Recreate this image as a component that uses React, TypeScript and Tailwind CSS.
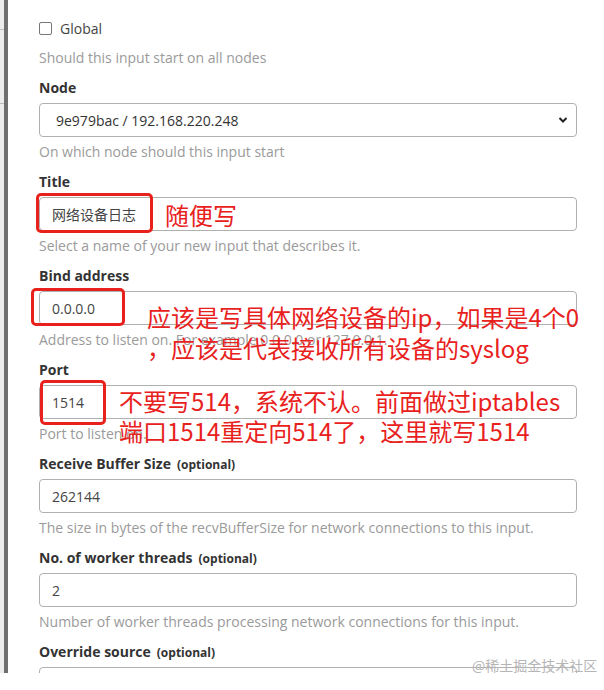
import React from "react";

const font = { fontFamily: '"Open Sans", "Noto Sans", sans-serif' };
const cjk = { fontFamily: '"Noto Sans CJK SC", "Noto Sans", sans-serif' };

function Label({ text, optional }: { text: string; optional?: boolean }) {
  return (
    <div className="h-[20px] leading-[20px] text-[14px] font-bold text-[#333] flex items-baseline">
      <span>{text}</span>
      {optional && <span className="ml-[6px] text-[12px] font-bold text-[#333]">(optional)</span>}
    </div>
  );
}

function Help({ text, top = "mt-[5px]" }: { text: string; top?: string }) {
  return <div className={`${top} h-[20px] leading-[20px] text-[14px] text-[#9a9a9a] whitespace-nowrap`}>{text}</div>;
}

function Input({ value }: { value: string }) {
  return (
    <div className="mt-[5px] h-[34px] w-[538px] rounded-[4px] border border-[#b0b0b0] bg-white flex items-center pl-[12px] text-[14px] text-[#444]">
      <span style={value.match(/[\u4e00-\u9fff]/) ? cjk : undefined}>{value}</span>
    </div>
  );
}

function Field({ label, optional, value, help }: { label: string; optional?: boolean; value: string; help: string }) {
  return (
    <div className="mb-[10px]">
      <Label text={label} optional={optional} />
      <Input value={value} />
      <Help text={help} />
    </div>
  );
}

export default function App() {
  return (
    <div className="relative w-[604px] h-[690px] overflow-hidden bg-white" style={font}>
      <div className="flex h-[673px]">
        <div className="w-[4px] bg-[#ececec] flex flex-col">
          <div className="h-[29px]" />
          <div className="h-[1px] bg-[#bdbdbd]" />
          <div className="h-[73px]" />
          <div className="h-[1px] bg-[#bdbdbd]" />
        </div>
        <div className="w-[4px] bg-[#6f6f6f]" />
        <div className="flex-1 pl-[31px] pt-[18px] overflow-hidden">
          <div className="h-[20px] flex items-center gap-[8px] text-[14px] text-[#444]">
            <div className="w-[13px] h-[13px] rounded-[2px] border border-[#767676] bg-white" />
            <span>Global</span>
          </div>
          <Help text="Should this input start on all nodes" top="mt-[10px]" />
          <div className="mt-[10px]">
            <Label text="Node" />
            <div className="mt-[5px] h-[34px] w-[538px] rounded-[4px] border border-[#b0b0b0] bg-white flex items-center justify-between pl-[16px] pr-[8px] text-[14px] text-[#333]">
              <span>9e979bac / 192.168.220.248</span>
              <svg width="10" height="8" viewBox="0 0 10 8">
                <path d="M1.5 2 L5 5.5 L8.5 2" fill="none" stroke="#222" strokeWidth="2" />
              </svg>
            </div>
            <Help text="On which node should this input start" />
          </div>
          <div className="mt-[10px]">
            <Field label="Title" value="网络设备日志" help="Select a name of your new input that describes it." />
            <Field label="Bind address" value="0.0.0.0" help="Address to listen on. For example 0.0.0.0 or 127.0.0.1." />
            <Field label="Port" value="1514" help="Port to listen on." />
            <Field label="Receive Buffer Size" optional value="262144" help="The size in bytes of the recvBufferSize for network connections to this input." />
            <Field label="No. of worker threads" optional value="2" help="Number of worker threads processing network connections for this input." />
            <Field label="Override source" optional value="" help="" />
          </div>
        </div>
      </div>

      {/* annotation boxes */}
      <div className="absolute left-[36px] top-[193px] w-[117px] h-[40px] rounded-[5px] border-[3px] border-[#e8211d]" />
      <div className="absolute left-[31px] top-[288px] w-[94px] h-[38px] rounded-[5px] border-[3px] border-[#e8211d]" />
      <div className="absolute left-[40px] top-[380px] w-[66px] h-[45px] rounded-[5px] border-[3px] border-[#e8211d]" />

      {/* annotation text */}
      <div className="absolute left-[165px] top-[199px] text-[24px] leading-[32px] text-[#e8211d] whitespace-nowrap" style={cjk}>随便写</div>
      <div className="absolute left-[147px] top-[301px] text-[24px] leading-[31px] text-[#e8211d] whitespace-nowrap" style={cjk}>
        <div>应该是写具体网络设备的ip，如果是4个0</div>
        <div>，应该是代表接收所有设备的syslog</div>
      </div>
      <div className="absolute left-[119px] top-[386px] text-[24px] leading-[30px] text-[#e8211d] whitespace-nowrap" style={cjk}>
        <div>不要写514，系统不认。前面做过iptables</div>
        <div>端口1514重定向514了，这里就写1514</div>
      </div>

      {/* watermark */}
      <div className="absolute left-[472px] top-[655px] text-[14px] leading-[20px] text-[#b5b5b5] whitespace-nowrap" style={cjk}>@稀土掘金技术社区</div>
    </div>
  );
}
